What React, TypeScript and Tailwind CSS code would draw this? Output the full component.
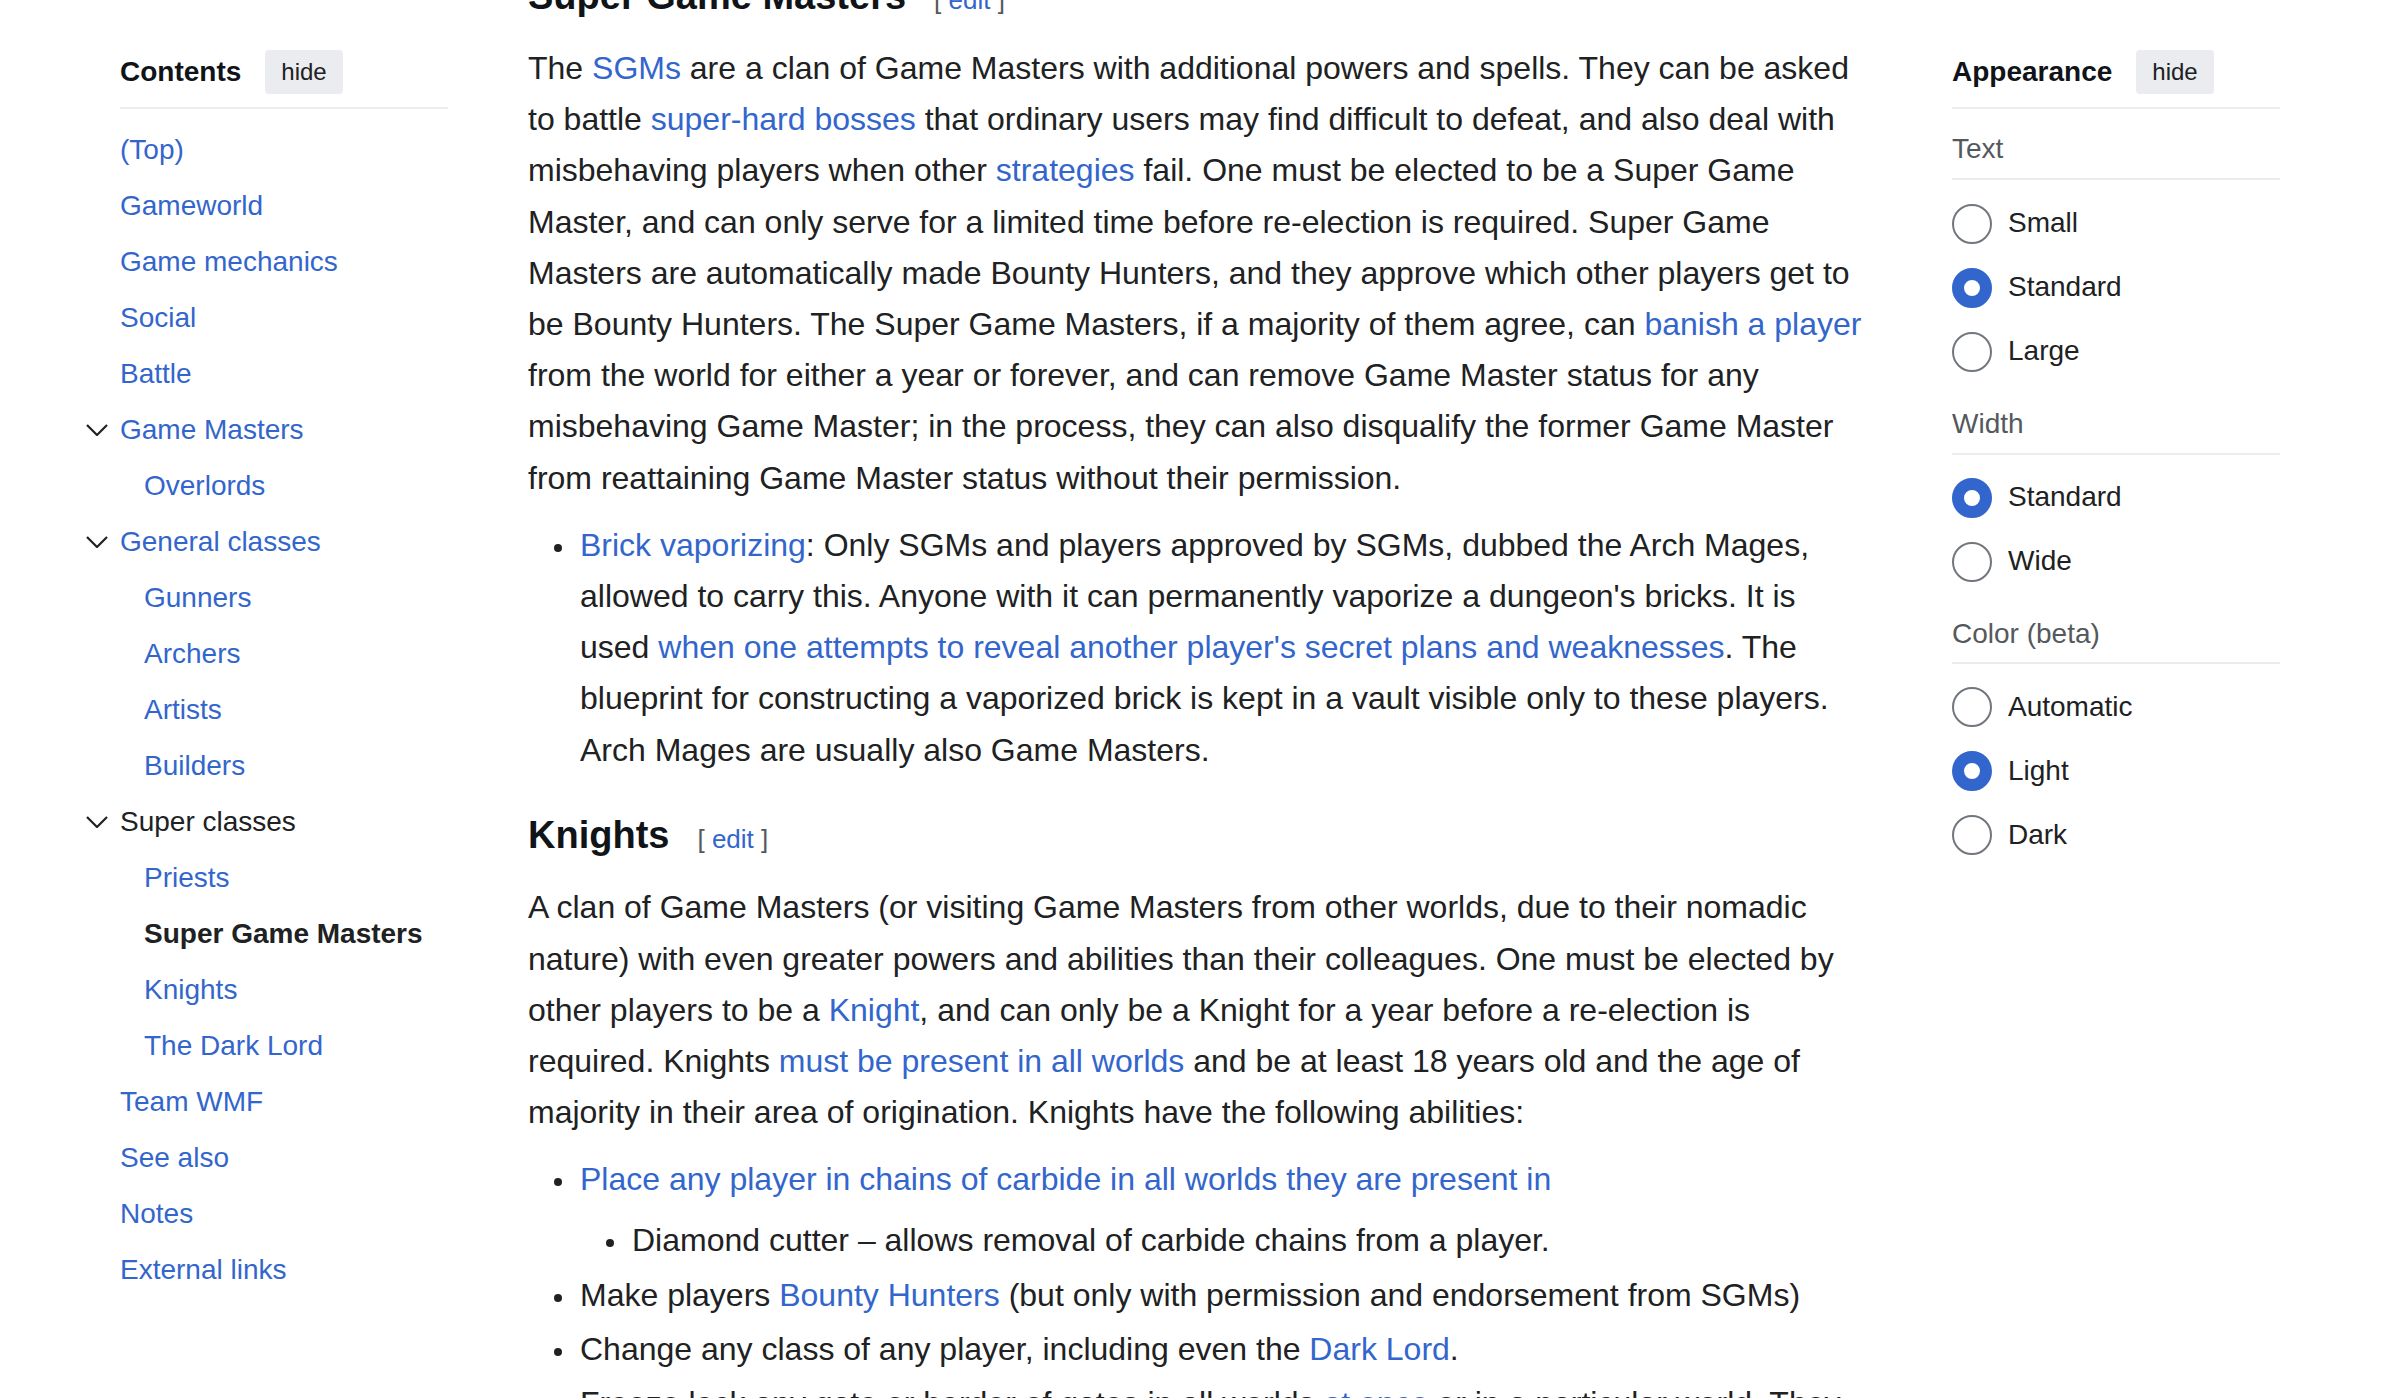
import React from "react";

const A = ({ children }: { children: React.ReactNode }) => (
  <a className="text-[#3366cc] cursor-pointer">{children}</a>
);

function Chevron() {
  return (
    <svg width="22" height="12" viewBox="0 0 22 12" fill="none">
      <polyline points="1,1 11,11 21,1" stroke="#202122" strokeWidth="2.2" strokeLinecap="butt" strokeLinejoin="miter" />
    </svg>
  );
}

type TocItem = { label: string; sub?: boolean; kind?: "link" | "text" | "bold"; chevron?: boolean };

const toc: TocItem[] = [
  { label: "(Top)" },
  { label: "Gameworld" },
  { label: "Game mechanics" },
  { label: "Social" },
  { label: "Battle" },
  { label: "Game Masters", chevron: true },
  { label: "Overlords", sub: true },
  { label: "General classes", chevron: true },
  { label: "Gunners", sub: true },
  { label: "Archers", sub: true },
  { label: "Artists", sub: true },
  { label: "Builders", sub: true },
  { label: "Super classes", chevron: true, kind: "text" },
  { label: "Priests", sub: true },
  { label: "Super Game Masters", sub: true, kind: "bold" },
  { label: "Knights", sub: true },
  { label: "The Dark Lord", sub: true },
  { label: "Team WMF" },
  { label: "See also" },
  { label: "Notes" },
  { label: "External links" },
];

function SideHeader({ title }: { title: string }) {
  return (
    <>
      <div className="flex items-center gap-[24px] h-[44px]">
        <span className="text-[28px] font-bold text-[#101418] leading-[44px]">{title}</span>
        <button className="h-[44px] px-[16px] bg-[#eaecf0] rounded-[4px] text-[24px] text-[#202122] leading-[44px]">
          hide
        </button>
      </div>
      <div className="mt-[13px] h-[2px] bg-[#eaecf0]" />
    </>
  );
}

function Radio({ label, checked }: { label: string; checked?: boolean }) {
  return (
    <div className="flex items-center gap-[16px] h-[64px]">
      {checked ? (
        <span className="shrink-0 w-[40px] h-[40px] rounded-full border-[12px] border-[#3366cc] bg-white" />
      ) : (
        <span className="shrink-0 w-[40px] h-[40px] rounded-full border-2 border-[#72777d] bg-white" />
      )}
      <span className="text-[28px] leading-[44.8px] text-[#202122]">{label}</span>
    </div>
  );
}

function Group({ label, options, checked, first }: { label: string; options: string[]; checked: number; first?: boolean }) {
  return (
    <div>
      <div className={"mt-[18px] text-[28px] leading-[44.8px] text-[#54595d]"}>{label}</div>
      <div className="mt-[6px] h-[2px] bg-[#eaecf0]" />
      <div className={first ? "mt-[12px]" : "mt-[11px]"}>
        {options.map((o, i) => (
          <Radio key={o} label={o} checked={i === checked} />
        ))}
      </div>
    </div>
  );
}

function Li({ children, nested, inner }: { children: React.ReactNode; nested?: React.ReactNode; inner?: boolean }) {
  return (
    <li className={"flex " + (inner ? "" : "mb-[3.2px]")}>
      <span className="shrink-0 w-[52px] h-[51.2px] flex items-start">
        <span className="ml-[26px] mt-[24px] w-[8px] h-[8px] rounded-full bg-[#202122]" />
      </span>
      <div className="min-w-0">
        <div>{children}</div>
        {nested}
      </div>
    </li>
  );
}

function EditLink() {
  return (
    <span className="ml-[28px] text-[26px] font-normal leading-[1] text-[#54595d]">
      [ <A>edit</A> ]
    </span>
  );
}

export default function App() {
  return (
    <div
      className="w-[2400px] h-[1398px] overflow-hidden bg-white px-[120px] grid grid-cols-[328px_1fr_328px] gap-x-[80px] items-start"
      style={{ fontFamily: '"Liberation Sans", Arial, Helvetica, sans-serif' }}
    >
      {/* Left: Contents */}
      <nav className="pt-[50px]">
        <SideHeader title="Contents" />
        <ul className="mt-[13px]">
          {toc.map((t) => (
            <li key={t.label} className={"flex items-center h-[56px] " + (t.sub ? "pl-[24px]" : "")}>
              {t.chevron && (
                <span className="-ml-[34px] w-[34px] flex items-center">
                  <Chevron />
                </span>
              )}
              <span
                className={
                  "text-[28px] leading-[56px] whitespace-nowrap " +
                  (t.kind === "bold"
                    ? "font-bold text-[#202122]"
                    : t.kind === "text"
                    ? "text-[#202122]"
                    : "text-[#3366cc]")
                }
              >
                {t.label}
              </span>
            </li>
          ))}
        </ul>
      </nav>

      {/* Main content */}
      <main className="-mt-[34px] text-[32px] leading-[51.2px] text-[#202122]">
        <h3 className="text-[38px] leading-[61px] font-bold text-[#101418]">
          Super Game Masters
          <EditLink />
        </h3>
        <p className="mt-[16px]">
          The <A>SGMs</A> are a clan of Game Masters with additional powers and spells. They can be asked to battle{" "}
          <A>super-hard bosses</A> that ordinary users may find difficult to defeat, and also deal with misbehaving
          players when other <A>strategies</A> fail. One must be elected to be a Super Game Master, and can only serve
          for a limited time before re-election is required. Super Game Masters are automatically made Bounty Hunters,
          and they approve which other players get to be Bounty Hunters. The Super Game Masters, if a majority of them
          agree, can <A>banish a player</A> from the world for either a year or forever, and can remove Game Master
          status for any misbehaving Game Master; in the process, they can also disqualify the former Game Master from
          reattaining Game Master status without their permission.
        </p>
        <ul className="mt-[16px]">
          <Li>
            <A>Brick vaporizing</A>: Only SGMs and players approved by SGMs, dubbed the Arch Mages, allowed to carry
            this. Anyone with it can permanently vaporize a dungeon's bricks. It is used{" "}
            <A>when one attempts to reveal another player's secret plans and weaknesses</A>. The blueprint for
            constructing a vaporized brick is kept in a vault visible only to these players. Arch Mages are usually also
            Game Masters.
          </Li>
        </ul>
        <h3 className="mt-[29.5px] text-[38px] leading-[61px] font-bold text-[#101418]">
          Knights
          <EditLink />
        </h3>
        <p className="mt-[16px]">
          A clan of Game Masters (or visiting Game Masters from other worlds, due to their nomadic nature) with even
          greater powers and abilities than their colleagues. One must be elected by other players to be a{" "}
          <A>Knight</A>, and can only be a Knight for a year before a re-election is required. Knights{" "}
          <A>must be present in all worlds</A> and be at least 18 years old and the age of majority in their area of
          origination. Knights have the following abilities:
        </p>
        <ul className="mt-[16px]">
          <Li
            nested={
              <ul className="mt-[9.6px]">
                <Li inner>Diamond cutter – allows removal of carbide chains from a player.</Li>
              </ul>
            }
          >
            <A>Place any player in chains of carbide in all worlds they are present in</A>
          </Li>
          <Li>
            Make players <A>Bounty Hunters</A> (but only with permission and endorsement from SGMs)
          </Li>
          <Li>
            Change any class of any player, including even the <A>Dark Lord</A>.
          </Li>
          <Li>
            Freeze lock any gate or border of gates in all worlds <A>at once</A> or in a particular world. They can
            also unlock any gate that has been frozen by another player.
          </Li>
        </ul>
      </main>

      {/* Right: Appearance */}
      <aside className="pt-[50px]">
        <SideHeader title="Appearance" />
        <Group first label="Text" options={["Small", "Standard", "Large"]} checked={1} />
        <Group label="Width" options={["Standard", "Wide"]} checked={0} />
        <Group label="Color (beta)" options={["Automatic", "Light", "Dark"]} checked={1} />
      </aside>
    </div>
  );
}
